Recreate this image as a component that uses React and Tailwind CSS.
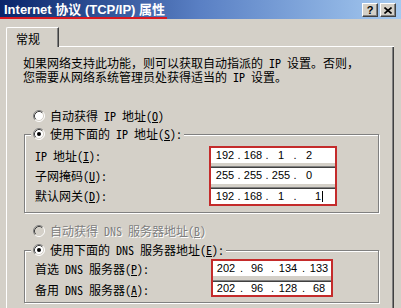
import React from "react";

const CJK = "font-['Noto_Sans_Mono_CJK_SC','Noto_Sans_CJK_SC',sans-serif]";
const NUM = "font-['Liberation_Sans',sans-serif]";

function Radio({ checked, disabled }) {
  return (
    <svg width="12" height="12" viewBox="0 0 12 12" className="shrink-0">
      <circle cx="6" cy="6" r="5" fill={disabled ? "#d4d0c8" : "#fff"} />
      <path d="M2.11 9.89A5.5 5.5 0 0 1 9.89 2.11" stroke="#808080" fill="none" />
      <path d="M9.89 2.11A5.5 5.5 0 0 1 2.11 9.89" stroke="#fff" fill="none" />
      <path d="M2.82 9.18A4.5 4.5 0 0 1 9.18 2.82" stroke="#404040" fill="none" />
      <path d="M9.18 2.82A4.5 4.5 0 0 1 2.82 9.18" stroke="#d4d0c8" fill="none" />
      {checked && <circle cx="6" cy="6" r="2" fill={disabled ? "#808080" : "#000"} />}
    </svg>
  );
}

function RadioRow({ checked, disabled, children }) {
  return (
    <div className="flex items-center gap-[5px] h-[14px]">
      <Radio checked={checked} disabled={disabled} />
      <span
        className={
          disabled
            ? "text-[#808080] [text-shadow:1px_1px_0_#fff] whitespace-nowrap"
            : "text-black whitespace-nowrap"
        }
      >
        {children}
      </span>
    </div>
  );
}

// one IP address edit box, octets laid out in fixed cells
function IpField({ octets, cell, dot, pad, className, caret }) {
  return (
    <div className={"bg-white flex items-center leading-none text-[11px] text-black " + NUM + " " + className}>
      <div className="flex items-center" style={{ paddingLeft: pad }}>
        {octets.map((o, i) => (
          <React.Fragment key={i}>
            {i > 0 && (
              <span className="text-center" style={{ width: dot }}>
                .
              </span>
            )}
            <span
              className={"flex items-center " + (caret && i === 3 ? "justify-end" : "justify-center")}
              style={{ width: caret && i === 3 ? cell + 4 : cell }}
            >
              {o}
              {caret && i === 3 && <span className="ml-px w-px h-[11px] bg-black" />}
            </span>
          </React.Fragment>
        ))}
      </div>
    </div>
  );
}

function GroupBox({ legend, children, className }) {
  return (
    <div
      className={
        "ml-[17px] w-[355px] border border-[#808080] shadow-[inset_1px_1px_0_#fff,1px_1px_0_#fff] " +
        className
      }
    >
      <div className="-mt-[8px] ml-[6px] w-fit px-[2px] bg-[#d4d0c8]">{legend}</div>
      {children}
    </div>
  );
}

function TitleButton({ children }) {
  return (
    <div className="w-[16px] h-[14px] bg-[#d4d0c8] border-t border-l border-white border-r border-b border-r-[#404040] border-b-[#404040] shadow-[inset_-1px_-1px_0_#808080] flex items-center justify-center">
      {children}
    </div>
  );
}

export default function App() {
  return (
    <div className={"w-[401px] h-[308px] overflow-hidden bg-[#d4d0c8] flex flex-col text-[12px] " + CJK}>
      {/* title bar */}
      <div className="h-[19px] shrink-0 flex items-start justify-between bg-linear-to-r from-[#0a246a] via-[#5a80c4] to-[#a6caf0]">
        <div className="h-[19px] pl-[4px] pr-[2px] pt-[2px] border-b-2 border-[#d8181f] flex items-center">
          <span className="text-white font-bold text-[13px] whitespace-nowrap font-['Liberation_Sans','Noto_Sans_CJK_SC',sans-serif]">
            Internet 协议 (TCP/IP) 属性
          </span>
        </div>
        <div className="flex gap-[2px] pt-[3px] pr-[5px]">
          <TitleButton>
            <span className="font-bold text-[11px] leading-none text-black font-['Liberation_Sans',sans-serif]">?</span>
          </TitleButton>
          <TitleButton>
            <svg width="8" height="7" viewBox="0 0 8 7">
              <path d="M0.5 0.5L7.5 6.5M7.5 0.5L0.5 6.5" stroke="#000" strokeWidth="1.6" />
            </svg>
          </TitleButton>
        </div>
      </div>

      {/* tabs */}
      <div className="mt-[8px] ml-[6px] mr-[7px] flex shrink-0">
        <div className="h-[20px] w-[53px] border-t border-l border-white rounded-tl-[2px] border-r border-r-[#404040] shadow-[inset_-1px_0_0_#808080] pl-[9px] pt-[2px]">
          常规
        </div>
        <div className="flex-1 self-end h-px bg-white" />
      </div>

      {/* panel */}
      <div className="ml-[6px] mr-[7px] flex-1 border-l border-white border-r border-r-[#404040] shadow-[inset_-1px_0_0_#808080] flex flex-col">
        <p className="mt-[9px] ml-[16px] leading-[14px] whitespace-nowrap">
          如果网络支持此功能，则可以获取自动指派的 IP 设置。否则，
          <br />
          您需要从网络系统管理员处获得适当的 IP 设置。
        </p>

        <div className="mt-[25px] ml-[26px]">
          <RadioRow>
            自动获得 IP 地址(<u>O</u>)
          </RadioRow>
        </div>

        <GroupBox
          className="mt-[11px] pb-[6px]"
          legend={
            <RadioRow checked>
              使用下面的 IP 地址(<u>S</u>):
            </RadioRow>
          }
        >
          <div className="mt-[5px] flex">
            <div className="w-[184px] pl-[10px] pt-[2px] flex flex-col gap-[4px]">
              <div className="h-[16px] flex items-center">IP 地址(<u>I</u>):</div>
              <div className="h-[16px] flex items-center">子网掩码(<u>U</u>):</div>
              <div className="h-[16px] flex items-center">默认网关(<u>D</u>):</div>
            </div>
            <div className="w-[128px] border-2 border-[#c42b2b] flex flex-col gap-[3px]">
              <IpField octets={["192", "168", "1", "2"]} cell={20} dot={8} pad={4} className="h-[15px]" />
              <IpField
                octets={["255", "255", "255", "0"]}
                cell={20}
                dot={8}
                pad={4}
                className="h-[18px] border-t border-[#808080] shadow-[inset_0_1px_0_#404040]"
              />
              <IpField
                octets={["192", "168", "1", "1"]}
                cell={20}
                dot={8}
                pad={4}
                caret
                className="h-[17px] border-t border-[#808080] shadow-[inset_0_1px_0_#404040]"
              />
            </div>
          </div>
        </GroupBox>

        <div className="mt-[11px] ml-[26px]">
          <RadioRow disabled>
            自动获得 DNS 服务器地址(<u>B</u>)
          </RadioRow>
        </div>

        <GroupBox
          className="mt-[12px] pb-[5px]"
          legend={
            <RadioRow checked>
              使用下面的 DNS 服务器地址(<u>E</u>):
            </RadioRow>
          }
        >
          <div className="mt-[2px] flex">
            <div className="w-[186px] pl-[10px] pt-[2px] flex flex-col gap-[6px]">
              <div className="h-[15px] flex items-center">首选 DNS 服务器(<u>P</u>):</div>
              <div className="h-[15px] flex items-center">备用 DNS 服务器(<u>A</u>):</div>
            </div>
            <div className="w-[122px] border-2 border-[#c42b2b] flex flex-col gap-[4px]">
              <IpField octets={["202", "96", "134", "133"]} cell={22} dot={9} pad={2} className="h-[15px]" />
              <IpField
                octets={["202", "96", "128", "68"]}
                cell={22}
                dot={9}
                pad={2}
                className="h-[15px] border-t border-[#808080] shadow-[inset_0_1px_0_#404040]"
              />
            </div>
          </div>
        </GroupBox>
      </div>
    </div>
  );
}
